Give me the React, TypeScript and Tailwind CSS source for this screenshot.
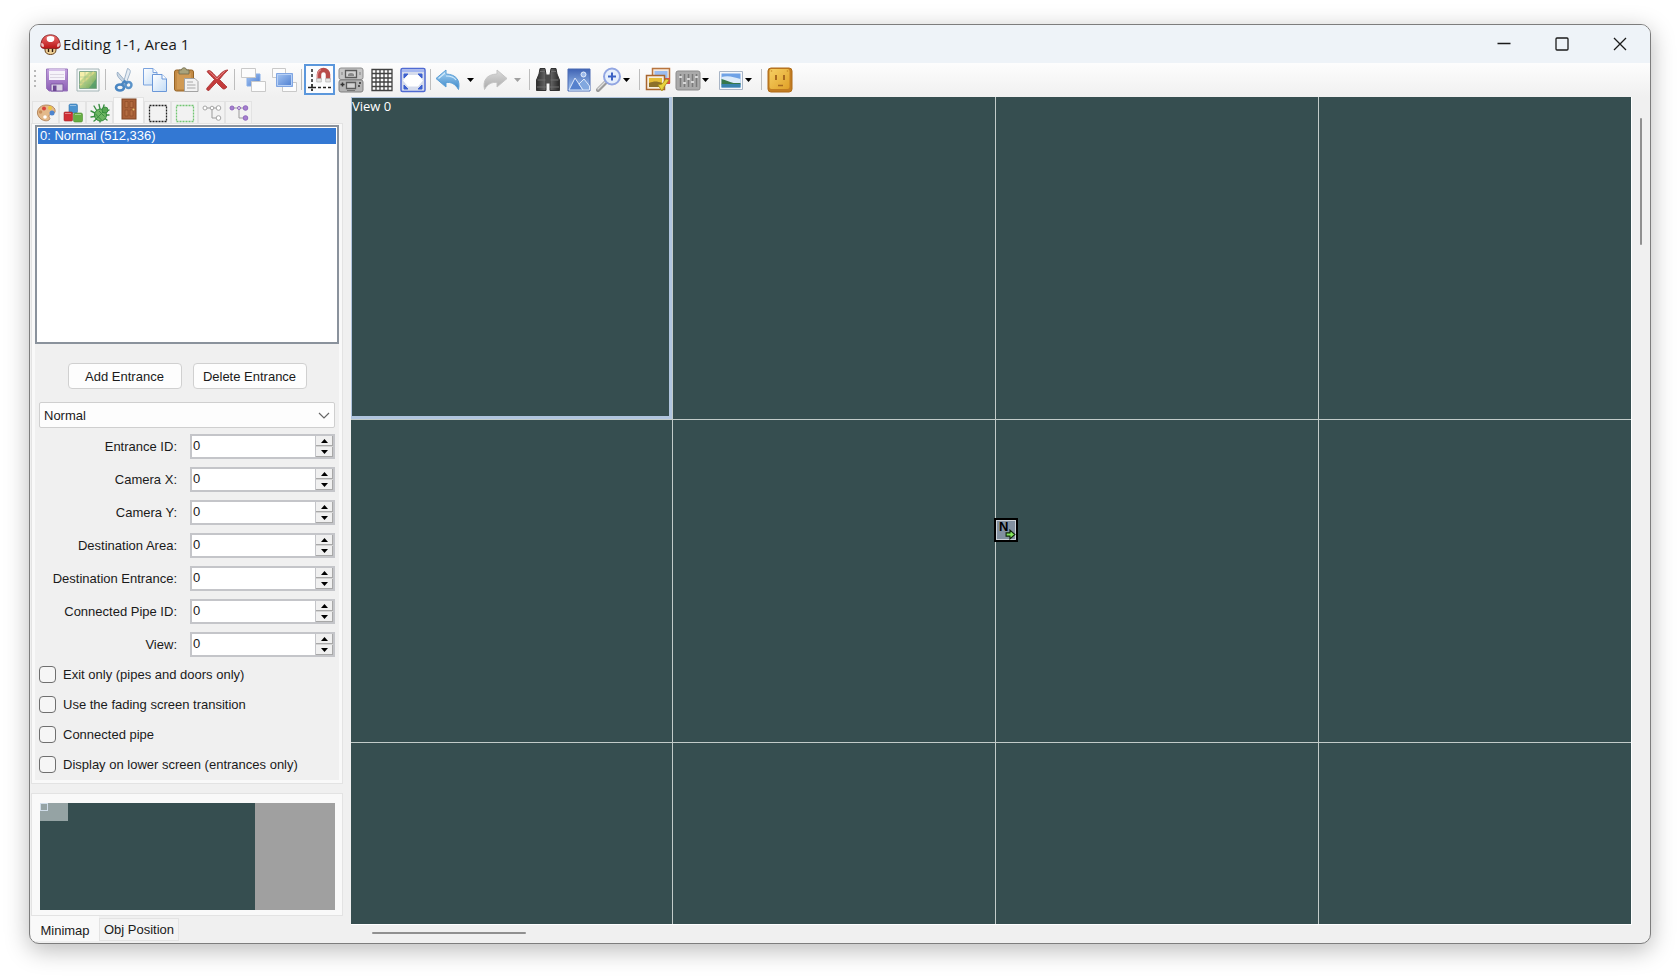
import { useState, type ReactNode } from 'react';

const outline = { fill: 'none', strokeLinecap: 'round' as const, strokeLinejoin: 'round' as const };

function Svg({ size = 26, box = 26, children }: { size?: number; box?: number; children: ReactNode }) {
  return (
    <svg width={size} height={size} viewBox={`0 0 ${box} ${box}`} className="block shrink-0" aria-hidden="true">
      {children}
    </svg>
  );
}

function Gradients() {
  return (
    <svg width="0" height="0" className="absolute" aria-hidden="true">
      <defs>
        <linearGradient id="purple" x1="0" y1="0" x2="0" y2="1"><stop offset="0" stopColor="#c3a0de" /><stop offset="1" stopColor="#8a5cb4" /></linearGradient>
        <linearGradient id="green" x1="0" y1="0" x2="1" y2="1"><stop offset="0" stopColor="#f4f2a6" /><stop offset="1" stopColor="#5f9f55" /></linearGradient>
        <linearGradient id="blue" x1="0" y1="0" x2="0" y2="1"><stop offset="0" stopColor="#a9d5f5" /><stop offset="1" stopColor="#3a86c8" /></linearGradient>
        <linearGradient id="grey" x1="0" y1="0" x2="0" y2="1"><stop offset="0" stopColor="#dcdcdc" /><stop offset="1" stopColor="#a9a9a9" /></linearGradient>
        <linearGradient id="page" x1="0" y1="0" x2="1" y2="1"><stop offset="0" stopColor="#ffffff" /><stop offset="1" stopColor="#c3dcf6" /></linearGradient>
        <linearGradient id="royal" x1="0" y1="0" x2="1" y2="1"><stop offset="0" stopColor="#a9c8f3" /><stop offset="1" stopColor="#4a7cd0" /></linearGradient>
        <linearGradient id="red" x1="0" y1="0" x2="0" y2="1"><stop offset="0" stopColor="#ee7070" /><stop offset="1" stopColor="#b81414" /></linearGradient>
        <linearGradient id="gold" x1="0" y1="0" x2="1" y2="1"><stop offset="0" stopColor="#f6cf63" /><stop offset="1" stopColor="#e0a128" /></linearGradient>
        <linearGradient id="dark" x1="0" y1="0" x2="1" y2="0"><stop offset="0" stopColor="#2c2c2c" /><stop offset="0.5" stopColor="#777777" /><stop offset="1" stopColor="#262626" /></linearGradient>
        <linearGradient id="dusk" x1="0" y1="0" x2="0" y2="1"><stop offset="0" stopColor="#3f63b4" /><stop offset="1" stopColor="#a5c8f2" /></linearGradient>
      </defs>
    </svg>
  );
}

const icons: Record<string, ReactNode> = {
  save: (
    <Svg>
      <path d="M2.500 2h21v22H5l-2.500-2.500z" fill="url(#purple)" stroke="#9a78bd" />
      <path d="M5 2h16v11H5z" fill="#f6f3fa" />
      <path d="M5 2h16v2H5z" fill="#d5bfe8" />
      <path d="M6 7.500h14M6 10.500h14" stroke="#dcd6e2" />
      <path d="M7 17h12v7H7z" fill="#d9d0e4" stroke="#7f5ba4" />
      <path d="M9 18.500h3.500V24H9z" fill="#6c4893" />
    </Svg>
  ),
  map: (
    <Svg>
      <path d="M2 2h22v22H2z" fill="#f4f8f8" stroke="#a4b4b6" />
      <path d="M4.500 4.500h17v17h-17z" fill="url(#green)" stroke="#83a98c" />
      <path d="M5 14 14 5H5z" fill="#f6efab" />
      <path d="M5 18 19 5" stroke="#d8d889" strokeWidth="2" />
      <path d="M5 10h16M10 5v16M16 5v16M5 16h16" stroke="#9fc08c" strokeWidth=".6" />
      <path d="m14 21 7-9v9z" fill="#4f9a6c" opacity=".7" />
    </Svg>
  ),
  cut: (
    <Svg>
      <path d="M16.500 1.500 12 17l2.500 1L19 6c.8-2 0-4-2.500-4.500z" fill="#e6edf4" stroke="#8ba5bf" strokeWidth=".8" />
      <path d="M6.500 5c-1 2 0 4 1 5.500l7.500 8 1.500-2z" fill="#c9d6e3" stroke="#8ba5bf" strokeWidth=".8" />
      <circle cx="17.500" cy="18" r="3" fill="none" stroke="#5b93c9" strokeWidth="2.400" />
      <ellipse cx="9" cy="20.500" rx="4" ry="3" fill="none" stroke="#4a86c2" strokeWidth="2.600" />
      <path d="m11 17 2.500-3 2 2" {...outline} stroke="#4a86c2" strokeWidth="2" />
    </Svg>
  ),
  copy: (
    <Svg>
      <path d="M1.500 1.500H11L15 5.500V18H1.500z" fill="url(#page)" stroke="#7ba3de" />
      <path d="M11 1.500v4h4" fill="#fff" stroke="#7ba3de" />
      <path d="M10.500 7.500H20l4.500 4.500v12.500h-14z" fill="url(#page)" stroke="#6a97d8" />
      <path d="M20 7.500V12h4.500" fill="#fff" stroke="#6a97d8" />
    </Svg>
  ),
  paste: (
    <Svg>
      <rect x="1.500" y="3" width="19" height="21" rx="2" fill="#c28a45" stroke="#956325" />
      <path d="M4 6h14v16H4z" fill="#d09a54" />
      <path d="M6 3h2.500c0-3 5-3 5 0H16v4H6z" fill="#a9a37c" stroke="#6f6a4d" strokeWidth=".8" />
      <path d="M11.500 11.500H22l3 3v10H11.500z" fill="#f2f2f2" stroke="#a3a3a3" />
      <path d="M14 15h6M14 18h8.500M14 21h8.500" stroke="#a8a8a8" />
    </Svg>
  ),
  remove: (
    <Svg>
      <path d="M3 4.500C5.500 2 7 4 13 10.500 17 6 20 3 24 3c-3 3-6 6-8.500 9.500 3 3 5 5 7.500 7.500-2 2.500-4 2.500-5 1l-5.500-5.500C9 19 7 21 5 23.500c-2 0-3-1-2-2.500l7.500-8.500C7.500 9.500 5 7 3 4.500z" fill="#c43b3b" stroke="#a53030" strokeWidth=".8" />
      <path d="M5 4.500c3 2 5 5 8 7.500 3-3 5-5.500 7.500-7.500" {...outline} stroke="#e38080" />
    </Svg>
  ),
  lower: (
    <Svg>
      <path d="M7 7h13v12H7z" fill="url(#royal)" stroke="#86aee8" />
      <path d="M1.500 1.500h14v9h-14zM11.500 14.500h14v10h-14z" fill="#fcfcfc" stroke="#c9c9c9" />
    </Svg>
  ),
  raise: (
    <Svg>
      <path d="M1.500 1.500h13v9h-13zM11.500 15.500h14v9h-14z" fill="#fcfcfc" stroke="#c9c9c9" />
      <path d="M5.500 6.500h16v13h-16z" fill="url(#royal)" stroke="#7fa5e2" />
      <path d="M6.500 7.500h14v11h-14z" fill="none" stroke="#b7d0f5" />
    </Svg>
  ),
  snap: (
    <Svg>
      <path d="M5 2v22M1 20.500h24" fill="none" stroke="#222" strokeWidth="1.500" strokeDasharray="3 2" />
      <path d="M1 20.500h8M5 17v7" stroke="#222" />
      <path d="M12 13V7.500a4.500 4.500 0 0 1 9 0V13" fill="none" stroke="#b84a4a" strokeWidth="4.500" />
      <path d="M10.500 12V8a6 6 0 0 1 3.500-5.200" fill="none" stroke="#dd8b8b" strokeWidth="1.200" />
      <path d="M9.700 11.500h4.600V15H9.700zM18.700 11.500h4.600V15h-4.600z" fill="#e4e4e4" stroke="#aaa" strokeWidth=".6" />
    </Svg>
  ),
  console: (
    <Svg>
      <rect x="1" y="1" width="24" height="11.500" rx="2" fill="#c6c6c6" stroke="#8e8e8e" />
      <rect x="1" y="13" width="24" height="12" rx="2" fill="#b4b4b4" stroke="#808080" />
      <path d="M7.500 3.500h11v7h-11zM8.500 15.500h9v6h-9z" fill="#d2d2d2" stroke="#5a5a5a" strokeWidth="1.300" />
      <path d="M10 9V8a3 2 0 0 1 6 0v1z" fill="#888" />
      <path d="M2.500 17.500h4M4.500 15.500v4" stroke="#333" strokeWidth="1.500" />
      <circle cx="22" cy="16" r="1" fill="#333" />
      <circle cx="21" cy="19" r="1" fill="#333" />
      <path d="M4 5v3M22 5v3" stroke="#999" strokeWidth="1.500" />
      <path d="M9 23.500h8" stroke="#777" />
    </Svg>
  ),
  grid: (
    <Svg>
      <path d="M3 2.500h20v21H3zM3 6.500h20M3 11h20M3 15h20M3 19.500h20M7 2.500v21M11 2.500v21M15 2.500v21M19 2.500v21" fill="#fdfdfd" stroke="#414141" strokeWidth="1.300" />
    </Svg>
  ),
  fullscreen: (
    <Svg>
      <rect x="1" y="1.500" width="24" height="23" rx="1.500" fill="#d6dcec" stroke="#4f6ad2" strokeWidth="1.500" />
      <path d="M2 2.500h22V5H2z" fill="#a5b7f0" />
      <path d="M8 8h10l5 5.500-5 6H8l-5-6z" fill="#fff" />
      <path d="M4 11V7h4zM22 11V7h-4zM4 18v4h4zM22 18v4h-4z" fill="#3d60cf" stroke="#3d60cf" />
    </Svg>
  ),
  undo: (
    <Svg>
      <path d="M11 3 1 11.500 11 20v-4.500c5-.5 9 1 12.500 7 2-9-2-15-12.500-15.500z" fill="url(#blue)" stroke="#5b9fd6" />
      <path d="m10 6-6.500 5.500M11 9c5 0 8 1 10 4" fill="none" stroke="#d0e9fb" strokeWidth="1.200" />
    </Svg>
  ),
  redo: (
    <Svg>
      <path d="m15 3 10 8.500L15 20v-4.500c-5-.5-9 1-12.500 7C.5 13.500 4.500 7.500 15 7z" fill="url(#grey)" stroke="#c4c4c4" />
    </Svg>
  ),
  find: (
    <Svg>
      <path d="M5 1.500h5l1 6v16H1.500V13L4 7zM21 1.500h-5l-1 6v16h9.500V13L22 7z" fill="url(#dark)" stroke="#333" />
      <path d="M10.500 7.500h5v9h-5z" fill="#4b4b4b" />
      <path d="M5 4.500h5M16 4.500h5M2.500 13h8M15.500 13h8M2 20h9M15 20h9" stroke="#6e6e6e" />
    </Svg>
  ),
  picture: (
    <Svg>
      <path d="M2 2h22v22H2z" fill="url(#dusk)" stroke="#4b6ab3" />
      <circle cx="17.500" cy="7.500" r="2.500" fill="#9ab8ea" stroke="#e7effb" />
      <path d="M3 23 9 11l8 12z" fill="#5581cd" stroke="#dbe7f9" />
      <path d="m13 17 5-5 5.500 7V23H17z" fill="#82a8df" stroke="#dbe7f9" />
    </Svg>
  ),
  zoom: (
    <Svg>
      <path d="m2 23 8-8" {...outline} stroke="#9a9a9a" strokeWidth="4" />
      <path d="m2 22 8-8" {...outline} stroke="#dedede" strokeWidth="1.500" />
      <circle cx="16" cy="9.500" r="8" fill="#e6effc" stroke="#92a6e2" strokeWidth="2" />
      <path d="M16 5.500v8M12 9.500h8" stroke="#3b62c4" strokeWidth="2" />
    </Svg>
  ),
  tileset: (
    <Svg>
      <path d="M7.500 1.500h17v14h-17z" fill="#f4e8dd" stroke="#b8753f" strokeWidth="1.500" />
      <path d="M9.500 4h13v7h-13z" fill="#9bbcf0" />
      <path d="M19 11h6v6h-6z" fill="#d85146" />
      <path d="M1.500 8.500h18v14h-18z" fill="#f7eede" stroke="#a8652e" strokeWidth="1.500" />
      <path d="M4 11h13v9H4z" fill="#e5bd36" />
      <path d="M4 16c5-2 8-2 13 0v4H4z" fill="#8d7029" />
      <path d="m13 18 4 6 2-4 5-7-3-1-4 5z" fill="#e7d23d" stroke="#a68d18" strokeWidth=".8" />
    </Svg>
  ),
  sliders: (
    <Svg>
      <rect x="1" y="4" width="24" height="19" rx="2" fill="#aaaaaa" stroke="#8b8b8b" />
      <path d="M5.500 7v13M9.500 7v13M13.500 7v13M17.500 7v13M21.500 7v13" stroke="#7a7a7a" strokeWidth="1.500" />
      <path d="M4 10h3M8 16h3M12 12h3M16 15h3M20 10h3" stroke="#d6d6d6" strokeWidth="2" />
    </Svg>
  ),
  scenery: (
    <Svg>
      <path d="M1.500 4.500h23v18h-23z" fill="#f7f8fa" stroke="#a8b5c6" />
      <path d="M3.500 6.500h19v14h-19z" fill="#6fa2e6" />
      <path d="M3.500 10c7-2 12 0 19 2v4h-19z" fill="#dcebfa" />
      <path d="M3.500 12c5 1 7 3 12 4h7v1.500h-19z" fill="#36784b" />
      <path d="M3.500 17h19v3.500h-19z" fill="#3983ad" />
    </Svg>
  ),
  block: (
    <Svg>
      <rect x="1" y="1" width="24" height="24" rx="3" fill="#c27d23" stroke="#b06c18" />
      <rect x="2.500" y="2" width="20" height="20" rx="2" fill="url(#gold)" />
      <path d="M9 8v5M17 8v5" stroke="#a86a20" strokeWidth="2" />
      <path d="M11 18.500h5" stroke="#a86a20" strokeWidth="1.500" />
      <circle cx="4.500" cy="4" r=".8" fill="#c98a2a" />
      <circle cx="20.500" cy="4" r=".8" fill="#c98a2a" />
    </Svg>
  ),
};

const tabIcons: { name: string; art: ReactNode }[] = [
  {
    name: 'Tilesets',
    art: (
      <Svg size={20} box={20}>
        <path d="M3 14C-1 9 3 2 10 2c6 0 10 3 9 7-1 3-6 1-6 4 0 2 2 2 0 4-3 2-8 0-10-3z" fill="#e3b98a" stroke="#a9774a" strokeWidth=".8" />
        <circle cx="8" cy="5.500" r="2" fill="#d9433b" />
        <circle cx="14" cy="5" r="2" fill="#ecc740" />
        <circle cx="16" cy="10" r="2.500" fill="#4c84cf" />
        <circle cx="4.500" cy="9" r="1.800" fill="#c98f5c" />
        <circle cx="9" cy="14" r="1.800" fill="#fff" />
      </Svg>
    ),
  },
  {
    name: 'Objects',
    art: (
      <Svg size={20} box={20}>
        <rect x="6" y="1" width="8.500" height="9" rx="1.500" fill="#4b93cf" stroke="#3575ad" strokeWidth=".6" />
        <rect x="1" y="9" width="8.500" height="9" rx="1" fill="#cf2f35" stroke="#a3252a" strokeWidth=".6" />
        <rect x="10.500" y="10" width="9" height="9" rx="1.500" fill="#67ae43" stroke="#4c8e2d" strokeWidth=".6" />
        <path d="M7 2.500h6M2 10.500h6M12 11.500h6" stroke="#fff" opacity=".4" />
      </Svg>
    ),
  },
  {
    name: 'Sprites',
    art: (
      <Svg size={20} box={20}>
        <path d="M9 1.500 10 6M14 2l-1 4M4 3l3 5M1 8l6 3M1 14l6-1M4 18l4-3M10 19v-4M17 17l-4-3M19 12h-4M19 7l-5 3" {...outline} stroke="#3b8f42" strokeWidth="1.400" />
        <ellipse cx="10.500" cy="12" rx="6" ry="6" fill="#6db563" stroke="#2f8638" />
        <path d="m6 16 8-8M5.500 11l6 6M9 8l5.500 5.500" stroke="#3c8f42" />
        <circle cx="15" cy="7" r="3" fill="#56a552" stroke="#2f8638" strokeWidth=".8" />
      </Svg>
    ),
  },
  {
    name: 'Entrances',
    art: (
      <Svg size={22} box={22}>
        <rect x="4" y="1" width="14" height="20" fill="#a96038" stroke="#7e4423" />
        <path d="M7 3.500h3v6H7zM12 3.500h3v6h-3zM7 12h3v6H7zM12 12h3v6h-3z" fill="#b56e43" stroke="#8e4f2a" strokeWidth=".7" />
        <circle cx="15.500" cy="11.500" r="1" fill="#e8c770" />
      </Svg>
    ),
  },
  {
    name: 'Views',
    art: (
      <Svg size={20} box={20}>
        <path d="M1.500 2.500h17v16h-17z" fill="none" stroke="#222" strokeWidth="1.300" strokeDasharray="2 1" />
      </Svg>
    ),
  },
  {
    name: 'Zones',
    art: (
      <Svg size={20} box={20}>
        <path d="M1.500 2.500h17v16h-17z" fill="none" stroke="#72c572" strokeWidth="1.300" strokeDasharray="2 1" />
      </Svg>
    ),
  },
  {
    name: 'Paths',
    art: (
      <Svg size={20} box={20}>
        <path d="M3 5h13M10 5v10h6" fill="none" stroke="#9b9b9b" />
        <g fill="#fff" stroke="#a5a5a5"><circle cx="3" cy="5" r="2" /><circle cx="10" cy="5" r="1.800" /><circle cx="16.500" cy="5" r="2.300" /><circle cx="16.500" cy="15" r="2.300" /></g>
      </Svg>
    ),
  },
  {
    name: 'Progress paths',
    art: (
      <Svg size={20} box={20}>
        <path d="M3 5h13M10 5v10h6" fill="none" stroke="#9b9b9b" />
        <g fill="#a57fd0" stroke="#8f68bd"><circle cx="3" cy="5" r="2" /><circle cx="10" cy="5" r="1.500" fill="#e3d6f2" /><circle cx="16.500" cy="5" r="2.300" /><circle cx="16.500" cy="15" r="2.300" /></g>
      </Svg>
    ),
  },
];

type Tool = { icon: string; label: string; menu?: 'wide' | 'tight'; on?: boolean; off?: boolean };

const toolGroups: Tool[][] = [
  [{ icon: 'save', label: 'Save' }, { icon: 'map', label: 'View minimap' }],
  [
    { icon: 'cut', label: 'Cut' },
    { icon: 'copy', label: 'Copy' },
    { icon: 'paste', label: 'Paste' },
    { icon: 'remove', label: 'Delete' },
  ],
  [{ icon: 'lower', label: 'Lower' }, { icon: 'raise', label: 'Raise' }],
  [
    { icon: 'snap', label: 'Snap to grid', on: true },
    { icon: 'console', label: 'Screen guide' },
    { icon: 'grid', label: 'Show grid' },
    { icon: 'fullscreen', label: 'Full screen' },
  ],
  [{ icon: 'undo', label: 'Undo', menu: 'wide' }, { icon: 'redo', label: 'Redo', menu: 'wide', off: true }],
  [
    { icon: 'find', label: 'Find' },
    { icon: 'picture', label: 'Export image' },
    { icon: 'zoom', label: 'Zoom', menu: 'tight' },
  ],
  [
    { icon: 'tileset', label: 'Edit tileset' },
    { icon: 'sliders', label: 'Level settings', menu: 'tight' },
    { icon: 'scenery', label: 'Background', menu: 'tight' },
  ],
  [{ icon: 'block', label: 'About' }],
];

const fields = ['Entrance ID', 'Camera X', 'Camera Y', 'Destination Area', 'Destination Entrance', 'Connected Pipe ID', 'View'];
const flags = ['Exit only (pipes and doors only)', 'Use the fading screen transition', 'Connected pipe', 'Display on lower screen (entrances only)'];

function ToolButton({ tool }: { tool: Tool }) {
  const width = tool.menu === 'wide' ? 'w-[47px] justify-between pr-1' : tool.menu === 'tight' ? 'w-[43px] gap-px' : 'w-[31px] justify-center';
  return (
    <button
      aria-label={tool.label}
      disabled={tool.off}
      className={`flex h-[31px] shrink-0 items-center border-2 ${width} ${tool.on ? 'border-[#5b97dc] bg-[#fbfcfe]' : 'border-transparent'}`}
    >
      {icons[tool.icon]}
      {tool.menu && (
        <svg width="7" height="4" viewBox="0 0 7 4" aria-hidden="true" className={`shrink-0 ${tool.off ? 'text-[#a0a0a0]' : 'text-black'}`}>
          <path d="M0 0h7L3.500 4z" fill="currentColor" />
        </svg>
      )}
    </button>
  );
}

function NumberRow({ label }: { label: string }) {
  const [value, setValue] = useState(0);
  const id = label.toLowerCase().replaceAll(' ', '-');
  const step = 'flex flex-1 items-center justify-center border-r border-b border-[#a8a8a8] bg-[#f0f0f0]';

  return (
    <div className="grid grid-cols-[138px_minmax(0,1fr)] items-center gap-[13px]">
      <label htmlFor={id} className="text-right whitespace-nowrap">{label}:</label>
      <div className="flex h-[25px] border-2 border-[#c4c5c9] bg-white">
        <input id={id} inputMode="numeric" value={value} onChange={(e) => setValue(Number(e.target.value) || 0)} className="w-0 flex-1 px-px pb-[3px] outline-none" />
        <div className="flex w-[18px] shrink-0 flex-col gap-px border-l border-[#c4c5c9] bg-[#d5d5d5]">
          <button aria-label={`Increase ${label}`} onClick={() => setValue(value + 1)} className={step}>
            <svg width="7" height="4" viewBox="0 0 7 4"><path d="M0 4h7L3.500 0z" /></svg>
          </button>
          <button aria-label={`Decrease ${label}`} onClick={() => setValue(value - 1)} className={step}>
            <svg width="7" height="4" viewBox="0 0 7 4"><path d="M0 0h7L3.500 4z" /></svg>
          </button>
        </div>
      </div>
    </div>
  );
}

function TitleBar() {
  return (
    <header className="flex h-[38px] shrink-0 items-center bg-[#eef3f8] pr-px pl-[10px]">
      <Svg size={21} box={21}>
        <path d="M5 12h11v4c0 3-2.500 4.500-5.500 4.500S5 19 5 16z" fill="#edcf96" stroke="#6b451f" />
        <path d="M.8 12C1 4 5 .8 10.500 .8S20 4 20.200 12c0 2.500-4 3-6 2.500H7C5 15 .8 14.500 .8 12z" fill="url(#red)" stroke="#7c1a1a" strokeWidth=".8" />
        <path d="M7 3c2-1.500 5-1.500 7 0 1 3-.5 5-3.500 5S6 6 7 3z" fill="#fff" />
        <path d="M1.300 9c2 0 3 1.500 2.500 4-2 0-3-1-2.500-4zM19.700 9c-2 0-3 1.500-2.500 4 2 0 3-1 2.500-4z" fill="#f0c4c4" />
        <path d="M8.500 15v3M12.500 15v3" stroke="#2d1a0c" strokeWidth="1.400" />
      </Svg>
      <h1 className="ml-[2px] flex-1 font-['Open_Sans','Noto_Sans',sans-serif] text-[15px] text-[#1a1a1a]">Editing 1-1, Area 1</h1>
      <button aria-label="Minimize" className="flex h-full w-[58px] items-center justify-center">
        <svg width="14" height="14" viewBox="0 0 14 14"><path d="M.5 6.500h13" stroke="#1a1a1a" strokeWidth="1.300" /></svg>
      </button>
      <button aria-label="Maximize" className="flex h-full w-[58px] items-center justify-center">
        <svg width="14" height="14" viewBox="0 0 14 14"><rect x="1" y="1" width="12" height="12" rx="1" fill="none" stroke="#1a1a1a" strokeWidth="1.300" /></svg>
      </button>
      <button aria-label="Close" className="flex h-full w-[58px] items-center justify-center">
        <svg width="14" height="14" viewBox="0 0 14 14"><path d="m1 1 12 12M13 1 1 13" stroke="#1a1a1a" strokeWidth="1.300" /></svg>
      </button>
    </header>
  );
}

function Toolbar() {
  return (
    <div className="flex h-[34px] shrink-0 items-center bg-gradient-to-b from-[#fdfdfd] to-[#f0f0f0] pb-px pl-1">
      <div className="mr-[5px] h-[20px] w-[2px] bg-[repeating-linear-gradient(to_bottom,#b8b8b8_0_2px,transparent_2px_5px)]" />
      {toolGroups.map((group, i) => (
        <div key={group[0].icon} className="flex items-center">
          {i > 0 && <div className="mx-[2px] h-[21px] w-px bg-[#bdbdbd]" />}
          {group.map((tool) => (
            <ToolButton key={tool.icon} tool={tool} />
          ))}
        </div>
      ))}
    </div>
  );
}

function EntrancePanel() {
  const [tab, setTab] = useState('Entrances');

  return (
    <div className="flex flex-1 flex-col">
      <div className="flex h-[26px] items-end pl-px">
        {tabIcons.map(({ name, art }) => (
          <button
            key={name}
            aria-label={name}
            onClick={() => setTab(name)}
            className={`flex items-center justify-center border-x border-t border-[#e3e3e3] ${tab === name ? 'h-[26px] w-[31px] bg-[#f9f9f9] pb-1' : 'h-[22px] w-[27px] bg-[#f2f2f2]'}`}
          >
            {art}
          </button>
        ))}
      </div>
      <div className="flex flex-1 border border-[#e3e3e3] bg-[#f9f9f9] px-[3px] pt-px pb-[3px]">
        <div className="flex min-w-0 flex-1 flex-col bg-[#f0f0f0] pb-[7px]">
          <ul className="min-h-[100px] flex-1 border-2 border-[#8a929c] bg-white p-px">
            <li className="h-[16px] bg-[#3378d3] px-[2px] leading-[16px] text-white">0: Normal (512,336)</li>
          </ul>
          <div className="mt-[19px] flex justify-center gap-[11px]">
            <button className="h-[26px] w-[114px] rounded border border-[#d0d0d0] bg-[#fdfdfd]">Add Entrance</button>
            <button className="h-[26px] w-[114px] rounded border border-[#d0d0d0] bg-[#fdfdfd]">Delete Entrance</button>
          </div>
          <div className="flex flex-col px-1">
            <div className="relative mt-[13px]">
              <select aria-label="Entrance type" className="h-[26px] w-full appearance-none rounded-xs border border-[#cfcfcf] bg-[#fdfdfd] px-[4px]">
                <option>Normal</option>
              </select>
              <svg width="12" height="7" viewBox="0 0 12 7" className="pointer-events-none absolute top-[10px] right-[5px]"><path d="m1 1 5 5 5-5" fill="none" stroke="#666" strokeWidth="1.200" /></svg>
            </div>
            <div className="mt-[6px] flex flex-col gap-[8px]">
              {fields.map((label) => (
                <NumberRow key={label} label={label} />
              ))}
            </div>
            <div className="mt-[9px] flex flex-col gap-[13px]">
              {flags.map((label) => (
                <label key={label} className="flex h-[17px] items-center gap-[7px] whitespace-nowrap">
                  <input type="checkbox" className="size-[17px] appearance-none rounded-[4px] border border-[#6f6f6f] bg-[#f6f6f6] checked:bg-[#0067c0]" />
                  {label}
                </label>
              ))}
            </div>
          </div>
        </div>
      </div>
    </div>
  );
}

function Minimap() {
  return (
    <div>
      <div className="border border-[#e3e3e3] bg-[#f9f9f9] pt-[9px] pr-[7px] pb-[5px] pl-[8px]">
        <div className="flex h-[107px] bg-[#a0a0a0]">
          <div className="relative w-[215px] bg-[#364e50]">
            <div className="absolute top-0 left-0 h-[18px] w-[28px] bg-[#95a3a4]" />
            <div className="absolute top-0 left-0 size-[8px] border border-[#cfdce8]" />
          </div>
        </div>
      </div>
      <div className="flex h-[27px] items-start">
        <button className="h-[25px] w-[68px] bg-[#f9f9f9] pt-1">Minimap</button>
        <button className="mt-[2px] h-[23px] w-[80px] border border-[#e3e3e3] bg-[#f3f3f3]">Obj Position</button>
      </div>
    </div>
  );
}

function LevelCanvas() {
  return (
    <main className="flex min-w-0 flex-1 flex-col">
      <div className="flex flex-1">
        <div className="relative flex-1 overflow-hidden border-r border-b border-white bg-[#364e50] bg-[linear-gradient(to_right,#c2cbc9_1px,transparent_1px),linear-gradient(to_bottom,#c2cbc9_1px,transparent_1px)] bg-[size:323px_323px] bg-[position:-2px_-1px]">
          <div className="h-[322px] w-[321px] border-t border-r-3 border-b-3 border-l border-[#b0c4de] font-['Open_Sans','Noto_Sans',sans-serif] text-[13px] leading-[16px] text-white">View 0</div>
          {/* entrance marker, placed in level coordinates */}
          <div className="absolute top-[421px] left-[643px] size-[24px] border-2 border-black bg-[#8290a0] outline-1 -outline-offset-3 outline-[#cdd2d8]">
            <span className="block pl-[3px] text-[13px] leading-[13px] font-bold text-black">N</span>
            <svg width="11" height="11" viewBox="0 0 10 10" className="absolute right-0 bottom-0"><path d="M1 3.500h3.500V1L9 5 4.500 9V6.500H1z" fill="#84e85c" stroke="#10240c" /></svg>
          </div>
        </div>
        <div className="w-[18px] pt-[21px] pl-[8px]">
          <div className="h-[127px] w-[2px] rounded-full bg-[#909090]" />
        </div>
      </div>
      <div className="h-[18px] pt-[7px] pl-[21px]">
        <div className="h-[2px] w-[154px] rounded-full bg-[#909090]" />
      </div>
    </main>
  );
}

export default function App() {
  return (
    <div className="flex min-h-screen flex-col bg-white px-[29px] pt-[24px] pb-[33px] font-['Liberation_Sans',Arial,sans-serif] text-[13px] leading-[17px] text-[#1a1a1a]">
      <Gradients />
      <div className="flex flex-1 flex-col overflow-hidden rounded-[10px] border border-[#7d7d7d] bg-[#f0f0f0] shadow-[0_6px_24px_rgba(0,0,0,0.28)]">
        <TitleBar />
        <Toolbar />
        <div className="flex flex-1">
          <aside className="flex w-[321px] shrink-0 flex-col gap-[9px] pr-[8px] pl-px">
            <EntrancePanel />
            <Minimap />
          </aside>
          <LevelCanvas />
        </div>
      </div>
    </div>
  );
}
